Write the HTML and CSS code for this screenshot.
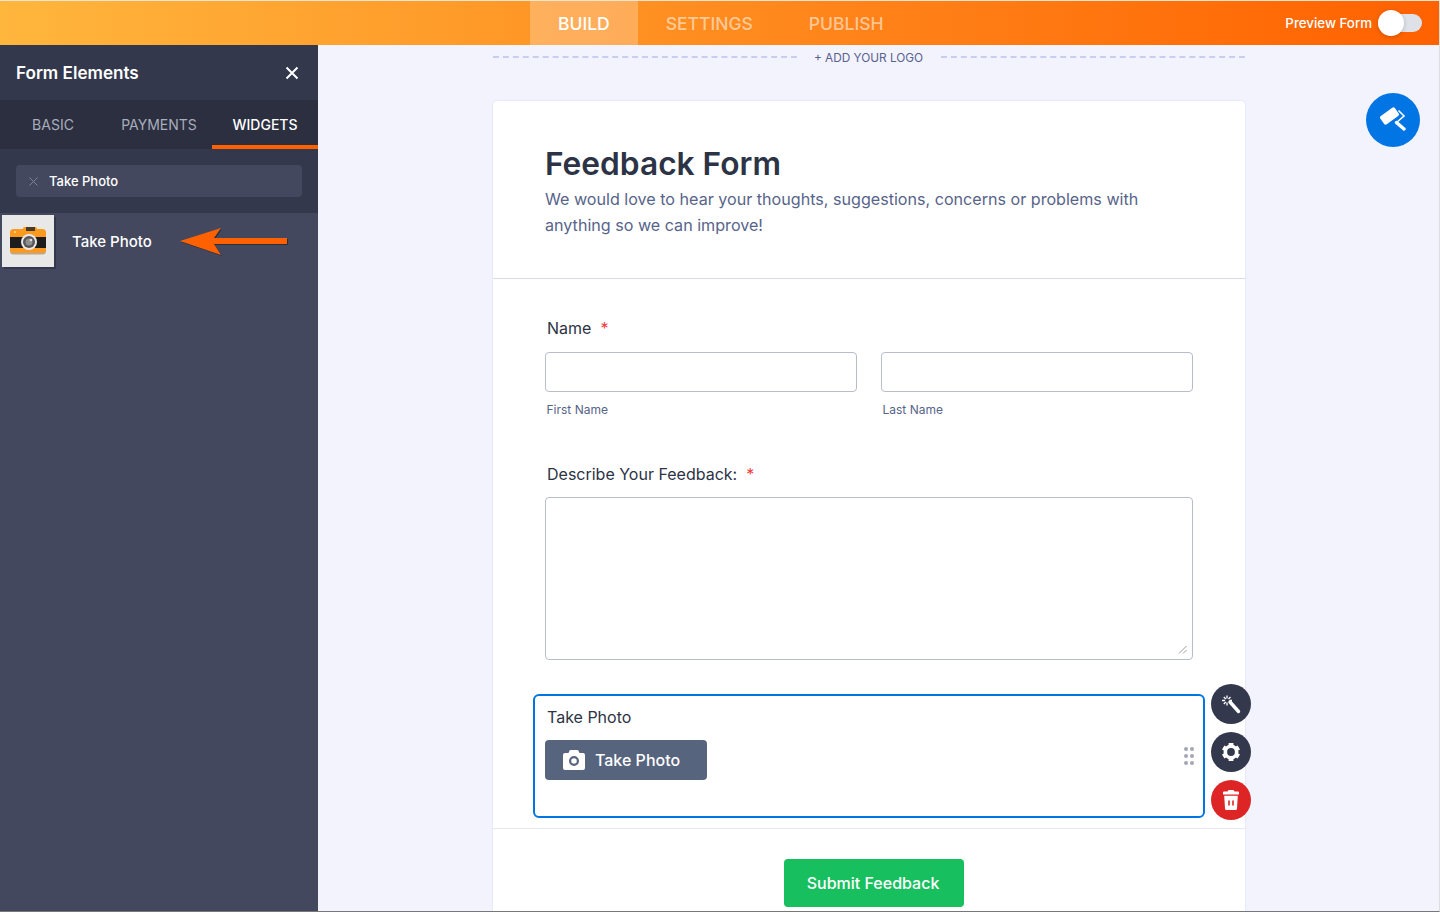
FILE: index.html
```html
<!DOCTYPE html>
<html lang="en">
<head>
  <meta charset="UTF-8">
  <title>Form Builder</title>
  <link rel="stylesheet" href="styles.css">
</head>
<body>
  <div class="app">
    <header class="topbar">
      <nav class="top-nav">
        <a class="top-link active">BUILD</a>
        <a class="top-link">SETTINGS</a>
        <a class="top-link">PUBLISH</a>
      </nav>
      <div class="preview">
        <span>Preview Form</span>
        <span class="switch"><span class="knob"></span></span>
      </div>
    </header>

    <div class="workspace">
      <aside class="sidebar">
        <div class="side-head">
          <span class="side-title">Form Elements</span>
          <svg class="side-close" width="14" height="14" viewBox="0 0 14 14"><path d="M1.5 1.5l11 11M12.5 1.5l-11 11" stroke="#fff" stroke-width="2" fill="none"/></svg>
        </div>
        <div class="side-tabs">
          <div class="side-tab">BASIC</div>
          <div class="side-tab">PAYMENTS</div>
          <div class="side-tab current">WIDGETS</div>
        </div>
        <div class="search-wrap">
          <div class="search">
            <svg width="9" height="9" viewBox="0 0 9 9"><path d="M.5.5l8 8M8.5.5l-8 8" stroke="#7f8499" stroke-width="1" fill="none"/></svg>
            <span>Take Photo</span>
          </div>
        </div>
        <div class="widget-list">
          <div class="widget-row">
            <div class="widget-thumb">
              <svg width="38" height="30" viewBox="0 0 38 30">
                <rect x="1" y="5" width="36" height="23.500" rx="3.500" fill="#c4a680"/>
                <rect x="1" y="3" width="36" height="23.500" rx="3.500" fill="#fb9a1e"/>
                <path d="M14 4V2.500a1.500 1.500 0 0 1 1.500-1.500h11A1.500 1.500 0 0 1 28 2.500V4z" fill="#fb9a1e"/>
                <rect x="17" y="1" width="9" height="4" fill="#4a3a24"/>
                <rect x="1" y="11" width="36" height="11" fill="#1d1d1d"/>
                <circle cx="20" cy="16" r="8" fill="#e9e9e9"/>
                <circle cx="20" cy="16" r="6" fill="#565656"/>
                <circle cx="20" cy="16" r="3.500" fill="#8f8f8f"/>
                <circle cx="22" cy="14" r="1.300" fill="#e4e4e4"/>
                <circle cx="6" cy="6" r="1" fill="#ffd9a8"/>
              </svg>
            </div>
            <span class="widget-name">Take Photo</span>
            <svg class="widget-arrow" width="108" height="30" viewBox="0 0 108 30">
              <path d="M0 15L41 2l-7 10h73v6H34l7 11z" fill="#ff6100"/>
            </svg>
          </div>
        </div>
      </aside>

      <main class="canvas">
        <div class="paint-btn">
          <svg width="26" height="26" viewBox="0 0 26 26" fill="#fff">
            <rect x="0.500" y="4" width="18" height="10" rx="2" transform="rotate(-36 9.500 9)"/>
            <path d="M18.500 3.500L24 9l-7.500 6.500" stroke="#fff" stroke-width="1.600" fill="none"/>
            <path d="M16.500 15.500l7.500 6.500" stroke="#fff" stroke-width="3.400" stroke-linecap="round"/>
          </svg>
        </div>
        <div class="form-col">
          <div class="logo-row">
            <span class="logo-line"></span>
            <span class="logo-text">+ ADD YOUR LOGO</span>
            <span class="logo-line"></span>
          </div>
          <div class="form-card">
            <div class="form-head">
              <h1>Feedback Form</h1>
              <p>We would love to hear your thoughts, suggestions, concerns or problems with anything so we can improve!</p>
            </div>
            <div class="form-body">
              <div class="field name-field">
                <div class="label">Name<span class="req">*</span></div>
                <div class="name-grid">
                  <div>
                    <div class="input"></div>
                    <div class="sub">First Name</div>
                  </div>
                  <div>
                    <div class="input"></div>
                    <div class="sub">Last Name</div>
                  </div>
                </div>
              </div>
              <div class="field feedback-field">
                <div class="label">Describe Your Feedback:<span class="req">*</span></div>
                <div class="textarea">
                  <svg class="grip" width="9" height="9" viewBox="0 0 9 9"><path d="M1 8.500L8.500 1M5 8.500L8.500 5" stroke="#9a9da8" stroke-width="1" fill="none"/></svg>
                </div>
              </div>
              <div class="field selected">
                <div class="label">Take Photo</div>
                <button class="photo-btn">
                  <svg width="22" height="20" viewBox="0 0 22 20"><path fill-rule="evenodd" fill="#fff" d="M7.500 0h7a1 1 0 0 1 .9.600L16.500 3H20a2 2 0 0 1 2 2v13a2 2 0 0 1-2 2H2a2 2 0 0 1-2-2V5a2 2 0 0 1 2-2h3.500L6.600.600A1 1 0 0 1 7.500 0zM11 6a5 5 0 1 0 0 10 5 5 0 0 0 0-10zm0 2.200a2.800 2.800 0 1 1 0 5.600 2.800 2.800 0 0 1 0-5.600z"/></svg>
                  Take Photo
                </button>
                <div class="drag">
                  <i></i><i></i><i></i><i></i><i></i><i></i>
                </div>
                <div class="tools">
                  <div class="tool">
                    <svg width="20" height="20" viewBox="0 0 20 20"><path d="M9 8l8.500 9.500" stroke="#fff" stroke-width="3.400" stroke-linecap="round"/><path d="M6 1.500v3M6 8.500v3M1 6.500h3M8.500 6.500h2.500M2.800 3l2 2M9.500 3l-2 2M2.800 10l2-2" stroke="#fff" stroke-width="1.300" fill="none"/></svg>
                  </div>
                  <div class="tool">
                    <svg width="20" height="20" viewBox="0 0 20 20" fill="#fff">
                      <circle cx="10" cy="10" r="5.700" fill="none" stroke="#fff" stroke-width="3.600"/>
                      <rect x="7.600" y="1" width="4.800" height="4"/>
                      <rect x="7.600" y="1" width="4.800" height="4" transform="rotate(60 10 10)"/>
                      <rect x="7.600" y="1" width="4.800" height="4" transform="rotate(120 10 10)"/>
                      <rect x="7.600" y="1" width="4.800" height="4" transform="rotate(180 10 10)"/>
                      <rect x="7.600" y="1" width="4.800" height="4" transform="rotate(240 10 10)"/>
                      <rect x="7.600" y="1" width="4.800" height="4" transform="rotate(300 10 10)"/>
                    </svg>
                  </div>
                  <div class="tool danger">
                    <svg width="16" height="20" viewBox="0 0 16 20"><path fill="#fff" fill-rule="evenodd" d="M5.500 0h5l1 1.500H15a1 1 0 0 1 1 1V4.500H0v-2a1 1 0 0 1 1-1h3.500zM1.200 5.800h13.600L14 18.500a1.500 1.500 0 0 1-1.500 1.500H3.500A1.500 1.500 0 0 1 2 18.500zM5.200 10.500v5h1.600v-5zm4 0v5h1.600v-5z"/></svg>
                  </div>
                </div>
              </div>
            </div>
            <div class="form-foot">
              <button class="submit">Submit Feedback</button>
            </div>
          </div>
        </div>
      </main>
    </div>
  </div>
</body>
</html>
```

FILE: styles.css
```css
* {
  box-sizing: border-box;
}

html, body {
  margin: 0;
  height: 100%;
  overflow: hidden;
}

body {
  font-family: Inter, "Noto Sans", sans-serif;
  background-color: #f3f3fe;
  color: #2c3345;
}

.app {
  height: 912px;
  display: flex;
  flex-direction: column;
  border-top: 1px solid #f6e4cf;
  border-bottom: 1px solid #777;
  border-right: 1px solid #ddd;
}

.topbar {
  height: 44px;
  flex: none;
  position: relative;
  display: flex;
  justify-content: flex-end;
  align-items: center;
  background: linear-gradient(90deg, #ffb63d 0%, #ff6100 100%);
  padding-right: 17px;
}

.top-nav {
  position: absolute;
  left: 530px;
  top: 0;
  height: 44px;
  display: flex;
}

.top-link {
  display: flex;
  align-items: center;
  padding: 0 28px;
  font-size: 17.5px;
  font-weight: 500;
  color: rgba(255, 255, 255, 0.55);
}

.top-link.active {
  color: #fff;
  background-color: rgba(255, 255, 255, 0.25);
}

.preview {
  display: flex;
  align-items: center;
  gap: 6px;
  color: #fff;
  font-size: 13.3px;
  font-weight: 500;
}

.switch {
  position: relative;
  display: block;
  width: 44px;
  height: 18px;
  border-radius: 9px;
  background-color: #dfe1e8;
}

.knob {
  position: absolute;
  left: 0;
  top: -4px;
  width: 26px;
  height: 26px;
  border-radius: 50%;
  background-color: #fff;
  box-shadow: 0 1px 4px rgba(0, 0, 0, 0.2);
}

.workspace {
  flex: 1;
  display: flex;
  min-height: 0;
}

.sidebar {
  width: 318px;
  flex: none;
  display: flex;
  flex-direction: column;
  background-color: #33384c;
}

.side-head {
  height: 55px;
  display: flex;
  align-items: center;
  justify-content: space-between;
  padding: 0 19px 0 16px;
}

.side-title {
  color: #fff;
  font-size: 17.1px;
  font-weight: 600;
}

.side-tabs {
  height: 49px;
  display: flex;
  background-color: #2b2f40;
}

.side-tab {
  flex: 1;
  display: flex;
  align-items: center;
  justify-content: center;
  padding-bottom: 1px;
  font-size: 14px;
  color: #a9adbc;
}

.side-tab.current {
  color: #fff;
  font-weight: 500;
  box-shadow: inset 0 -4px 0 #ff6100;
}

.search-wrap {
  padding: 16px 16px;
}

.search {
  height: 32px;
  display: flex;
  align-items: center;
  gap: 11px;
  padding-left: 13px;
  background-color: #43485e;
  border-radius: 4px;
  color: #fff;
  font-size: 13px;
  font-weight: 500;
}

.widget-list {
  flex: 1;
  background-color: #43485e;
}

.widget-row {
  display: flex;
  align-items: center;
  height: 56px;
  padding-left: 2px;
  position: relative;
}

.widget-thumb {
  width: 52px;
  height: 52px;
  display: flex;
  align-items: center;
  justify-content: center;
  background-color: #e8e8e8;
  box-shadow: 2px 2px 0 #33384c;
}

.widget-name {
  margin-left: 18px;
  color: #fff;
  font-size: 15px;
  font-weight: 500;
}

.widget-arrow {
  position: absolute;
  left: 180px;
  top: 13px;
  filter: drop-shadow(1px 1px 0 rgba(0, 0, 0, 0.35));
}

.canvas {
  flex: 1;
  position: relative;
  min-width: 0;
  overflow: hidden;
  display: flex;
  justify-content: center;
  padding-left: 175px;
  padding-right: 194px;
}

.paint-btn {
  position: absolute;
  right: 19px;
  top: 48px;
  width: 54px;
  height: 54px;
  border-radius: 50%;
  background-color: #0075e3;
  display: flex;
  align-items: center;
  justify-content: center;
}

.form-col {
  width: 752px;
  flex: none;
}

.logo-row {
  height: 24px;
  display: flex;
  align-items: center;
  gap: 17px;
  margin-bottom: 32px;
}

.logo-line {
  flex: 1;
  border-top: 2px dashed #c8ceed;
}

.logo-text {
  font-size: 11.8px;
  color: #57628f;
  width: 110px;
  padding-top: 2px;
  white-space: nowrap;
}

.form-card {
  background-color: #fff;
  border-radius: 4px 4px 0 0;
  box-shadow: 0 0 2px rgba(86, 90, 140, 0.2);
}

.form-head {
  height: 178px;
  padding: 43px 52px 0;
  border-bottom: 1px solid #d8dae9;
}

.form-head h1 {
  margin: 0;
  font-size: 31.7px;
  line-height: 39px;
  font-weight: 600;
  color: #2c3345;
}

.form-head p {
  margin: 3px 0 0;
  font-size: 16.13px;
  line-height: 26px;
  color: #57648a;
}

.form-body {
  padding: 0 40px;
  border-bottom: 1px solid #e6e7f4;
  height: 550px;
}

.field {
  padding: 0 12px;
}

.label {
  font-size: 16px;
  line-height: 20px;
  font-weight: 400;
  color: #2c3345;
  padding-left: 2px;
}

.req {
  color: #f23a3c;
  margin-left: 9px;
}

.name-field {
  padding-top: 39px;
  height: 175px;
}

.name-grid {
  display: grid;
  grid-template-columns: 312px 312px;
  gap: 24px;
  margin-top: 14px;
}

.input {
  height: 40px;
  border: 1px solid #b8bdc9;
  border-radius: 4px;
  background-color: #fff;
}

.sub {
  margin-top: 10px;
  padding-left: 1.5px;
  font-size: 12px;
  line-height: 16px;
  color: #57648a;
}

.feedback-field {
  padding-top: 10px;
  height: 240px;
}

.textarea {
  position: relative;
  margin-top: 13px;
  height: 163px;
  width: 648px;
  border: 1px solid #b8bdc9;
  border-radius: 4px;
}

.grip {
  position: absolute;
  right: 5px;
  bottom: 5px;
}

.selected {
  position: relative;
  height: 124px;
  border: 2px solid #0075e3;
  border-radius: 6px;
  padding: 11px 10px 0;
}

.photo-btn {
  display: flex;
  align-items: center;
  gap: 10px;
  width: 162px;
  height: 40px;
  margin-top: 13px;
  padding: 0 0 0 18px;
  border: 0;
  border-radius: 4px;
  background-color: #57647e;
  color: #fff;
  font-family: inherit;
  font-size: 16px;
  font-weight: 500;
}

.drag {
  position: absolute;
  right: 9px;
  top: 51px;
  display: grid;
  grid-template-columns: 4px 4px;
  gap: 3px 2px;
}

.drag i {
  display: block;
  width: 4px;
  height: 4px;
  border-radius: 50%;
  background-color: #a3a7b5;
}

.tools {
  position: absolute;
  left: 676px;
  top: -12px;
  display: flex;
  flex-direction: column;
  gap: 8px;
}

.tool {
  width: 40px;
  height: 40px;
  border-radius: 50%;
  background-color: #33384c;
  display: flex;
  align-items: center;
  justify-content: center;
}

.tool.danger {
  background-color: #dd2525;
}

.form-foot {
  display: flex;
  justify-content: center;
  padding: 30px 0 0 10px;
  height: 90px;
}

.submit {
  width: 180px;
  height: 48px;
  border: 0;
  border-radius: 4px;
  padding: 0 2px 0 0;
  background-color: #18bf5f;
  color: #fff;
  font-family: inherit;
  font-size: 16px;
  font-weight: 500;
}
```
